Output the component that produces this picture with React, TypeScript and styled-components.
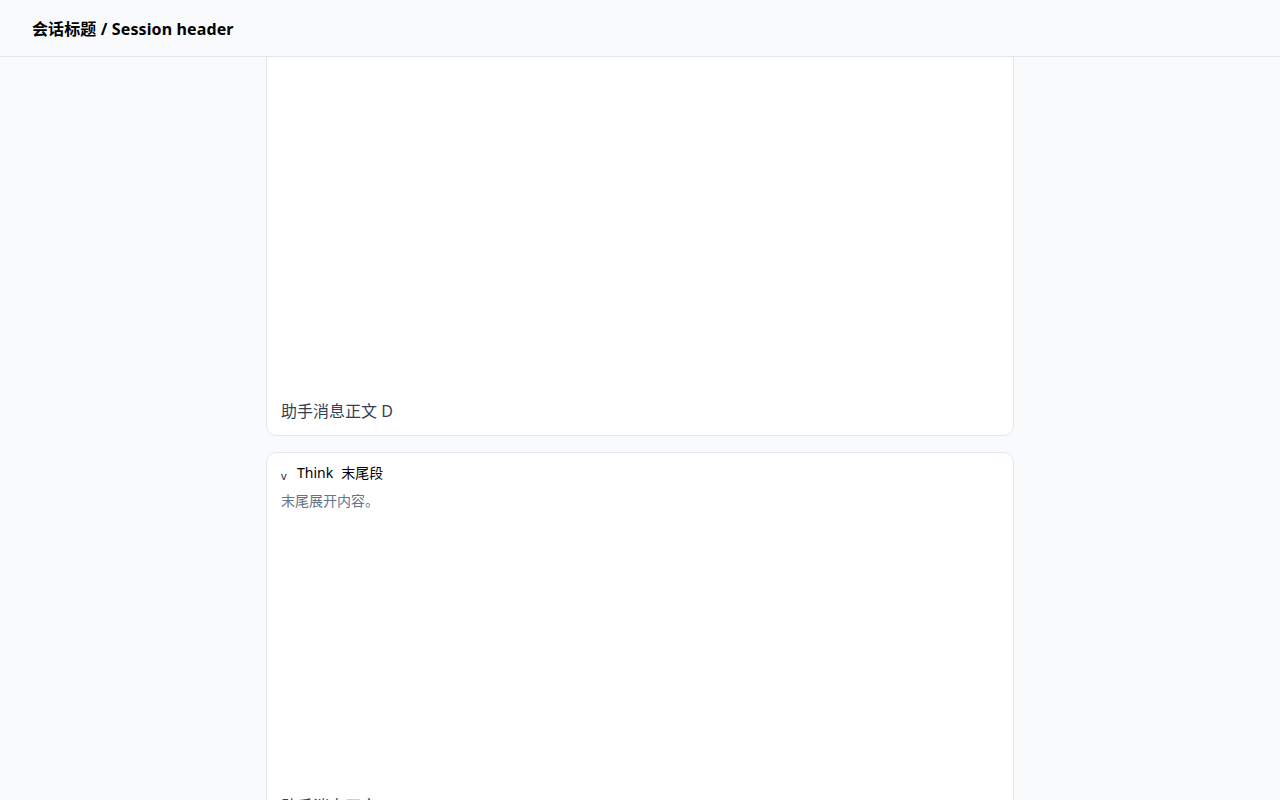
import React, { useLayoutEffect, useRef } from 'react'
import styled, { createGlobalStyle } from 'styled-components'

interface Message {
  id: string
  thinkTitle: string
  thinkText: string
  thinkMinHeight: number
  body: string
}

const messages: Message[] = [
  { id: 'a', thinkTitle: '第一段', thinkText: '第一段展开内容。', thinkMinHeight: 323, body: '助手消息正文 A' },
  { id: 'b', thinkTitle: '第二段', thinkText: '第二段展开内容。', thinkMinHeight: 323, body: '助手消息正文 B' },
  { id: 'c', thinkTitle: '第三段', thinkText: '第三段展开内容。', thinkMinHeight: 323, body: '助手消息正文 C' },
  { id: 'd', thinkTitle: '中间段', thinkText: '中间段展开内容。', thinkMinHeight: 440, body: '助手消息正文 D' },
  { id: 'e', thinkTitle: '末尾段', thinkText: '末尾展开内容。', thinkMinHeight: 323, body: '助手消息正文 E' },
]

// distance from the top of the scroll area to the last card in the picture
const LAST_CARD_OFFSET = 395

export default function App() {
  const scrollRef = useRef<HTMLDivElement>(null)
  const lastRef = useRef<HTMLDivElement>(null)

  useLayoutEffect(() => {
    if (!scrollRef.current || !lastRef.current) return
    scrollRef.current.scrollTop = lastRef.current.offsetTop - LAST_CARD_OFFSET
  }, [])

  return (
    <>
      <GlobalStyle />
      <Page>
        <Header>
          <Title>会话标题 / Session header</Title>
        </Header>
        <ScrollArea ref={scrollRef}>
          <List>
            {messages.map((m, i) => (
              <Card key={m.id} ref={i === messages.length - 1 ? lastRef : undefined}>
                <ThinkBlock $minHeight={m.thinkMinHeight}>
                  <ThinkToggle>
                    <Chevron>v</Chevron>
                    <ThinkLabel>Think</ThinkLabel>
                    <ThinkTitle>{m.thinkTitle}</ThinkTitle>
                  </ThinkToggle>
                  <ThinkText>{m.thinkText}</ThinkText>
                </ThinkBlock>
                <Body>{m.body}</Body>
              </Card>
            ))}
          </List>
        </ScrollArea>
      </Page>
    </>
  )
}

const GlobalStyle = createGlobalStyle`
  html, body {
    margin: 0;
    padding: 0;
    background: #f9fafc;
    font-family: "Noto Sans", "Noto Sans CJK SC", sans-serif;
  }
  * { box-sizing: border-box; }
`

const Page = styled.div`
  display: flex;
  flex-direction: column;
  height: 100vh;
  background: #f9fafc;
`

const Header = styled.header`
  display: flex;
  align-items: center;
  height: 57px;
  flex-shrink: 0;
  padding: 0 32px;
  border-bottom: 1px solid #e2e6ef;
  background: #f9fafc;
`

const Title = styled.h1`
  margin: 0;
  font-size: 16px;
  font-weight: 700;
  letter-spacing: 0.12px;
  color: #000;
`

const ScrollArea = styled.main`
  position: relative;
  flex: 1;
  overflow: hidden;
`

const List = styled.div`
  display: flex;
  flex-direction: column;
  gap: 16px;
  width: 748px;
  margin: 0 auto;
  padding: 16px 0 600px;
`

const Card = styled.div`
  display: flex;
  flex-direction: column;
  gap: 8px;
  padding: 10px 14px 12px;
  background: #fff;
  border: 1px solid #e2e6ef;
  border-radius: 10px;
`

const ThinkBlock = styled.div<{ $minHeight: number }>`
  display: flex;
  flex-direction: column;
  gap: 10px;
  min-height: ${(p) => p.$minHeight}px;
`

const ThinkToggle = styled.div`
  display: flex;
  align-items: center;
  height: 18px;
  cursor: pointer;
`

const Chevron = styled.span`
  display: inline-block;
  width: 16px;
  font-size: 11px;
  line-height: 1;
  margin-top: 7px;
  color: #1e293b;
`

const ThinkLabel = styled.span`
  font-size: 14px;
  color: #000;
`

const ThinkTitle = styled.span`
  margin-left: 8px;
  font-size: 14px;
  color: #000;
`

const ThinkText = styled.div`
  font-size: 14px;
  line-height: 20px;
  color: #64748b;
`

const Body = styled.div`
  font-size: 16px;
  line-height: 24px;
  color: #334155;
`
